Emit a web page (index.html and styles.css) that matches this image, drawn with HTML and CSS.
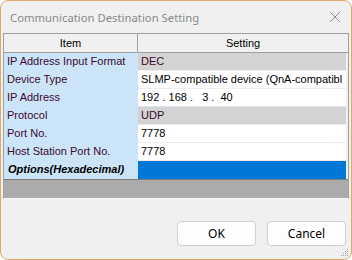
FILE: index.html
```html
<!DOCTYPE html>
<html lang="en">
<head>
  <meta charset="UTF-8">
  <title>Communication Destination Setting</title>
  <link rel="stylesheet" href="styles.css">
</head>
<body>
  <div class="window">
    <div class="titlebar">
      <span class="title">Communication Destination Setting</span>
      <svg class="close" width="12" height="12" viewBox="0 0 12 12">
        <path d="M1 1 L11 11 M11 1 L1 11" stroke="#8c8c8c" stroke-width="1" fill="none"/>
      </svg>
    </div>

    <div class="grid">
      <div class="grid-head">
        <div class="head-item">Item</div>
        <div class="head-setting">Setting</div>
      </div>

      <div class="row">
        <div class="item">IP Address Input Format</div>
        <div class="value fixed purple">DEC</div>
      </div>
      <div class="row">
        <div class="item">Device Type</div>
        <div class="value">SLMP-compatible device (QnA-compatibl</div>
      </div>
      <div class="row">
        <div class="item">IP Address</div>
        <div class="value ip">192 . 168 .   3 .  40</div>
      </div>
      <div class="row">
        <div class="item">Protocol</div>
        <div class="value fixed purple">UDP</div>
      </div>
      <div class="row">
        <div class="item">Port No.</div>
        <div class="value">7778</div>
      </div>
      <div class="row">
        <div class="item">Host Station Port No.</div>
        <div class="value">7778</div>
      </div>
      <div class="row">
        <div class="item group">Options(Hexadecimal)</div>
        <div class="value selected"></div>
      </div>

      <div class="grid-empty"></div>
    </div>

    <div class="buttons">
      <button class="btn">OK</button>
      <button class="btn">Cancel</button>
    </div>

    <svg class="grip" width="8" height="8" viewBox="0 0 8 8">
      <rect x="6" y="0" width="1" height="1" fill="#a0a0a0"/>
      <rect x="4" y="2" width="1" height="1" fill="#a0a0a0"/>
      <rect x="6" y="2" width="1" height="1" fill="#a0a0a0"/>
      <rect x="2" y="4" width="1" height="1" fill="#a0a0a0"/>
      <rect x="4" y="4" width="1" height="1" fill="#a0a0a0"/>
      <rect x="6" y="4" width="1" height="1" fill="#a0a0a0"/>
      <rect x="0" y="6" width="1" height="1" fill="#a0a0a0"/>
      <rect x="2" y="6" width="1" height="1" fill="#a0a0a0"/>
      <rect x="4" y="6" width="1" height="1" fill="#a0a0a0"/>
      <rect x="6" y="6" width="1" height="1" fill="#a0a0a0"/>
    </svg>
  </div>
</body>
</html>
```

FILE: styles.css
```css
body {
  margin: 0;
  background-color: #ffffff;
  font-family: 'Liberation Sans', Arial, sans-serif;
}
.window {
  position: relative;
  width: 352px;
  height: 260px;
  box-sizing: border-box;
  border: 1px solid #dfa96b;
  border-radius: 8px;
  background-color: #f0f0f0;
  display: flex;
  flex-direction: column;
  overflow: hidden;
}
.titlebar {
  height: 32px;
  display: flex;
  align-items: center;
  justify-content: space-between;
  padding: 0 9px 0 9px;
}
.title {
  font-family: 'Segoe UI', 'Noto Sans', sans-serif;
  font-size: 11.3px;
  color: #8a8a8a;
}
.close {
  margin-right: 1px;
  margin-top: -1px;
}
/* property grid */
.grid {
  width: 346px;
  margin-left: 2px;
  border: 1px solid #a0a0a0;
  border-bottom-color: #f8f8f8;
  box-sizing: border-box;
  font-size: 11px;
}
.grid-head {
  display: flex;
  height: 18px;
  border-bottom: 1px solid #a0a0a0;
  background-color: #f0f0f0;
  color: #000;
}
.head-item {
  width: 133px;
  border-right: 1px solid #a0a0a0;
  text-align: center;
  line-height: 18px;
}
.head-setting {
  flex: 1;
  text-align: center;
  line-height: 18px;
}
.row {
  display: flex;
  height: 18px;
}
.item {
  width: 131px;
  padding-left: 3px;
  background-color: #cce4f7;
  color: #3a0a30;
  line-height: 17px;
  border-bottom: 1px solid #cce4f7;
  white-space: nowrap;
}
.item.group {
  padding-left: 4px;
  width: 130px;
  font-weight: bold;
  font-style: italic;
  color: #000;
}
.value {
  flex: 1;
  padding-left: 3px;
  margin-right: 2px;
  background-color: #ffffff;
  border-bottom: 1px solid #ececec;
  line-height: 17px;
  white-space: nowrap;
  overflow: hidden;
  color: #000;
}
.value.fixed {
  background-color: #d3d3d3;
}
.value.purple {
  color: #3a0a30;
}
.value.ip {
  white-space: pre;
  border-bottom-color: #d8e4f0;
}
.value.selected {
  background-color: #0078d7;
  border-bottom-color: #0078d7;
}
.grid-empty {
  height: 18px;
  border-top: 1px solid #7a7a7a;
  background-color: #ababab;
}
/* dialog buttons */
.buttons {
  display: flex;
  justify-content: flex-end;
  gap: 11px;
  padding: 22px 5px 0 0;
}
.btn {
  width: 79px;
  height: 25px;
  background-color: #fdfdfd;
  border: 1px solid #d0d0d0;
  border-radius: 4px;
  font-family: 'Segoe UI', 'Noto Sans', sans-serif;
  font-size: 12px;
  color: #000;
  padding: 0;
}
.grip {
  position: absolute;
  right: 2px;
  bottom: 2px;
}
```
